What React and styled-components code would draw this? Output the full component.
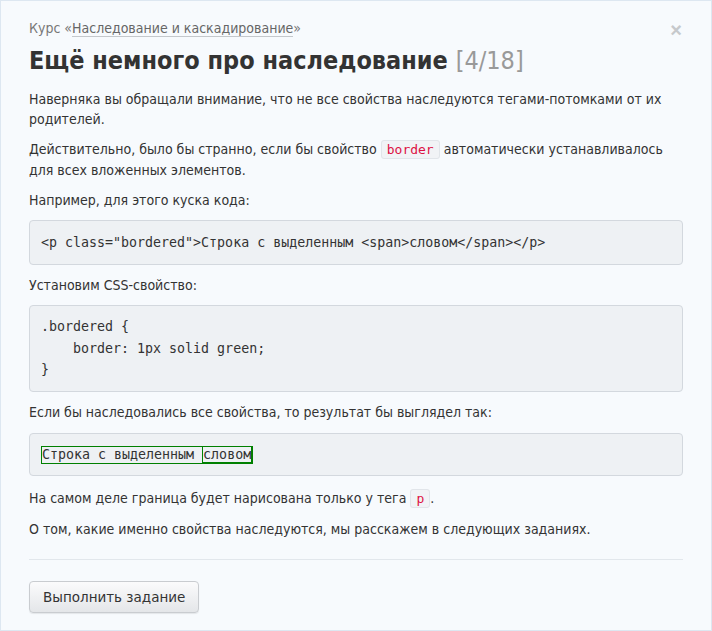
import React from "react";
import styled, { createGlobalStyle } from "styled-components";

const Global = createGlobalStyle`
  html, body { margin: 0; padding: 0; background: #f7fafd; }
  body { font-family: "DejaVu Sans Condensed", "DejaVu Sans", sans-serif; color: #333; }
  * { box-sizing: border-box; }
`;

const Modal = styled.div`
  position: relative;
  width: 712px;
  height: 631px;
  border: 1px solid #dde7f1;
  background: #f7fafd;
  padding: 17px 28px 0 28px;
  font-size: 14px;
  line-height: 20px;
  color: #333;
  overflow: hidden;
`;

const Close = styled.button`
  position: absolute;
  top: 19px;
  right: 29px;
  border: 0;
  background: none;
  padding: 0;
  font-family: "Liberation Sans", Arial, sans-serif;
  font-size: 20px;
  font-weight: bold;
  line-height: 20px;
  color: #c6c9cc;
  cursor: pointer;
`;

const Crumb = styled.div`
  color: #777;
  font-size: 14px;
  line-height: 20px;
`;

const CrumbLink = styled.a`
  color: #666;
  text-decoration: none;
  border-bottom: 1px solid #c4c8cc;
`;

const Title = styled.h1`
  margin: 6px 0 11px;
  font-size: 25px;
  line-height: 34px;
  font-weight: bold;
  color: #333;
`;

const Counter = styled.span`
  font-weight: normal;
  color: #999;
`;

const P = styled.p`
  margin: 0 0 ${(p) => (p.$tight ? "0" : "10px")};
`;

const InlineCode = styled.code`
  font-family: "DejaVu Sans Mono", "Liberation Mono", monospace;
  font-size: 13px;
  color: #dd1144;
  background: #f1f3f6;
  border: 1px solid #e1e5ea;
  border-radius: 3px;
  padding: 1px 5px;
`;

const Pre = styled.pre`
  margin: 0 0 10px;
  padding: 10.5px 11px;
  background: #eef1f4;
  border: 1px solid #d3d8de;
  border-radius: 4px;
  font-family: "DejaVu Sans Mono", "Liberation Mono", monospace;
  font-size: 13.3px;
  line-height: 21.5px;
  color: #333;
  white-space: pre;
`;

const Result = styled.div`
  display: flex;
  align-items: center;
  margin: 11px 0 12px;
  padding: 12px 11px 11px;
  background: #eef1f4;
  border: 1px solid #d3d8de;
  border-radius: 4px;
  font-family: "DejaVu Sans Mono", "Liberation Mono", monospace;
  font-size: 13.3px;
  color: #333;
`;

const Bordered = styled.span`
  display: inline-block;
  height: 18px;
  border: 1px solid green;
  line-height: 16px;
  white-space: pre;
`;

const Word = styled.span`
  border: 1px solid green;
`;

const Divider = styled.hr`
  border: 0;
  border-top: 1px solid #e2e7ec;
  margin: 20px 0 21px;
`;

const Button = styled.button`
  font-family: "DejaVu Sans", sans-serif;
  font-size: 13.5px;
  color: #333;
  height: 32px;
  padding: 0 13px;
  border: 1px solid #c9ccd0;
  border-radius: 4px;
  background: linear-gradient(#fbfbfc, #e4e6e9);
  box-shadow: 0 1px 1px rgba(0,0,0,0.08);
  cursor: pointer;
`;

export default function App() {
  return (
    <>
      <Global />
      <Modal>
        <Close aria-label="Закрыть">×</Close>
        <Crumb>
          Курс «<CrumbLink href="#">Наследование и каскадирование</CrumbLink>»
        </Crumb>
        <Title>
          Ещё немного про наследование <Counter>[4/18]</Counter>
        </Title>
        <P>Наверняка вы обращали внимание, что не все свойства наследуются тегами-потомками от их родителей.</P>
        <P>
          Действительно, было бы странно, если бы свойство <InlineCode>border</InlineCode> автоматически устанавливалось для всех вложенных элементов.
        </P>
        <P>Например, для этого куска кода:</P>
        <Pre>{'<p class="bordered">Строка с выделенным <span>словом</span></p>'}</Pre>
        <P>Установим CSS-свойство:</P>
        <Pre>{".bordered {\n    border: 1px solid green;\n}"}</Pre>
        <P $tight>Если бы наследовались все свойства, то результат бы выглядел так:</P>
        <Result>
          <Bordered>
            {"Строка с выделенным "}<Word>словом</Word>
          </Bordered>
        </Result>
        <P>
          На самом деле граница будет нарисована только у тега <InlineCode>p</InlineCode>.
        </P>
        <P>О том, какие именно свойства наследуются, мы расскажем в следующих заданиях.</P>
        <Divider />
        <Button>Выполнить задание</Button>
      </Modal>
    </>
  );
}
